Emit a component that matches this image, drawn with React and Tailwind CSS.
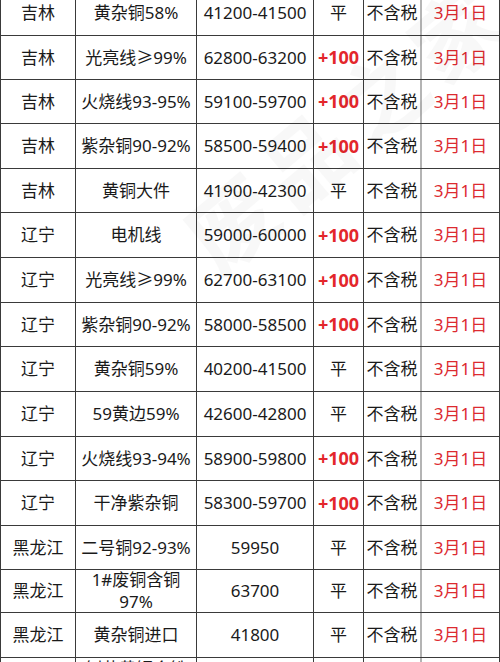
import React from "react";

const rows = [
  { h: 45, p: "吉林", n: "黄杂铜58%", price: "41200-41500", c: "平" },
  { h: 44, p: "吉林", n: "光亮线≥99%", price: "62800-63200", c: "+100" },
  { h: 44, p: "吉林", n: "火烧线93-95%", price: "59100-59700", c: "+100" },
  { h: 45, p: "吉林", n: "紫杂铜90-92%", price: "58500-59400", c: "+100" },
  { h: 44, p: "吉林", n: "黄铜大件", price: "41900-42300", c: "平" },
  { h: 45, p: "辽宁", n: "电机线", price: "59000-60000", c: "+100" },
  { h: 45, p: "辽宁", n: "光亮线≥99%", price: "62700-63100", c: "+100" },
  { h: 44, p: "辽宁", n: "紫杂铜90-92%", price: "58000-58500", c: "+100" },
  { h: 45, p: "辽宁", n: "黄杂铜59%", price: "40200-41500", c: "平" },
  { h: 45, p: "辽宁", n: "59黄边59%", price: "42600-42800", c: "平" },
  { h: 44, p: "辽宁", n: "火烧线93-94%", price: "58900-59800", c: "+100" },
  { h: 45, p: "辽宁", n: "干净紫杂铜", price: "58300-59700", c: "+100" },
  { h: 44, p: "黑龙江", n: "二号铜92-93%", price: "59950", c: "平" },
  { h: 43, p: "黑龙江", n: "1#废铜含铜\n97%", price: "63700", c: "平" },
  { h: 45, p: "黑龙江", n: "黄杂铜进口", price: "41800", c: "平" },
  { h: 45, p: "黑龙江", n: "刨花黄铜含铁\n90%", price: "38500", c: "平" },
];

const cell = "flex items-center justify-center text-center border-r border-[#3a3a3a] shrink-0";

export default function App() {
  return (
    <div
      className="relative w-[500px] h-[662px] overflow-hidden bg-white text-[17px] text-[#1a1a1a]"
      style={{ fontFamily: '"Noto Sans", "Noto Sans CJK SC", sans-serif' }}
    >
      <div className="-mt-[9px] border-l border-[#3a3a3a] w-[500px]">
        {rows.map((r, i) => (
          <div
            key={i}
            className="flex border-b border-[#3a3a3a]"
            style={{ height: r.h }}
          >
            <div className={`${cell} w-[75px]`}>{r.p}</div>
            <div className={`${cell} w-[121px] leading-[22px] whitespace-pre-line`}>{r.n}</div>
            <div className={`${cell} w-[117px]`}>{r.price}</div>
            <div className={`${cell} w-[50px]`}>
              {r.c === "平" ? (
                <span>平</span>
              ) : (
                <span className="font-bold text-[#e3262b] text-[18px]">+100</span>
              )}
            </div>
            <div className={`${cell} w-[58px] border-r-2 border-r-[#b4b4b4]`}>不含税</div>
            <div className={`${cell} w-[78px] text-[#dc2a30]`}>3月1日</div>
          </div>
        ))}
      </div>
      <div className="pointer-events-none absolute left-[150px] top-[60px] w-[380px] -rotate-[40deg] origin-center text-[88px] font-bold text-[#000] opacity-[0.025] tracking-[10px] whitespace-nowrap" style={{ fontFamily: '"Noto Sans CJK SC", sans-serif' }}>
        废品之家
      </div>
    </div>
  );
}
